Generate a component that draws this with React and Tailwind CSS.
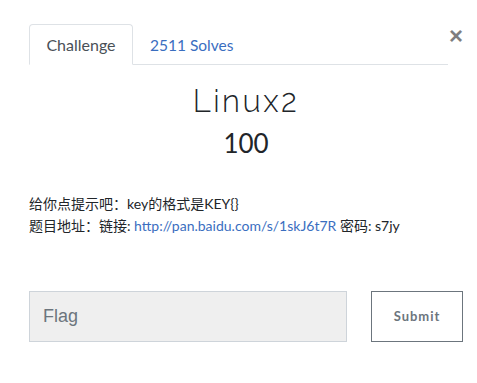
import React, { useState } from 'react';

const lato = { fontFamily: 'Lato, "Noto Sans CJK SC", sans-serif' };

export default function App() {
  const [tab, setTab] = useState('challenge');
  const [flag, setFlag] = useState('');

  return (
    <div className="relative w-[477px] h-[383px] bg-white pl-[29px] pr-[14px] pt-[24px] text-[#212529] font-['Lato','Noto_Sans_CJK_SC',sans-serif]">
      {/* close */}
      <button className="absolute top-[24px] right-[14px] text-[24px] font-bold leading-none text-[#000] opacity-50 font-['Liberation_Sans',sans-serif]">
        ×
      </button>

      {/* tabs */}
      <ul className="flex mr-[15px] border-b border-[#dee2e6] text-[16px]">
        <li className="-mb-px">
          <button
            onClick={() => setTab('challenge')}
            className="block w-[104px] h-[41px] border border-[#dee2e6] border-b-white rounded-t-[4px] bg-white text-[#495057] leading-[24px]"
          >
            Challenge
          </button>
        </li>
        <li className="-mb-px">
          <button
            onClick={() => setTab('solves')}
            className="block h-[41px] px-[16px] border border-transparent text-[15.5px] text-[#3a6ebf] leading-[24px]"
          >
            2511 Solves
          </button>
        </li>
      </ul>

      {/* title + value */}
      <div className="text-center">
        <h3 className="mt-[18px] text-[31px] leading-[36px] font-light tracking-[2.5px] text-[#212529] font-['Raleway','Lato',sans-serif]">
          Linux2
        </h3>
        <h4 className="mt-[7px] text-[26px] leading-[34px] text-[#212529]">100</h4>
      </div>

      {/* description */}
      <div className="mt-[33px] text-[14px] leading-[22px] text-[#212529]" style={lato}>
        <p>给你点提示吧：key的格式是KEY{'{}'}</p>
        <p>
          题目地址：链接:{' '}
          <a href="#" className="text-[#3a6ebf]">http://pan.baidu.com/s/1skJ6t7R</a> 密码: s7jy
        </p>
      </div>

      {/* flag form */}
      <div className="mt-[54px] flex items-start">
        <input
          value={flag}
          onChange={(e) => setFlag(e.target.value)}
          placeholder="Flag"
          className="w-[318px] h-[51px] bg-[#efefef] border border-[#ced4da] pl-[13px] text-[18px] font-['Liberation_Sans',sans-serif] placeholder:text-[#6c757d] outline-none"
        />
        <button className="ml-[24px] w-[92px] h-[51px] border border-[#6c757d] bg-white text-[13px] font-bold tracking-[1px] text-[#6c757d]">
          Submit
        </button>
      </div>
    </div>
  );
}
